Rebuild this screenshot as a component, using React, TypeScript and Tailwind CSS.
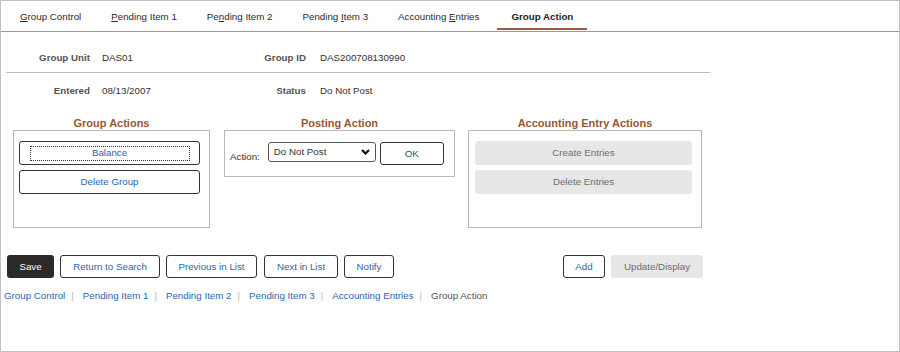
import React from "react";

// 탭 목록 (밑줄 글자는 접근키)
const tabs: { pre: string; key: string; post: string; active?: boolean }[] = [
  { pre: "", key: "G", post: "roup Control" },
  { pre: "", key: "P", post: "ending Item 1" },
  { pre: "Pe", key: "n", post: "ding Item 2" },
  { pre: "Pending ", key: "I", post: "tem 3" },
  { pre: "Accounting ", key: "E", post: "ntries" },
  { pre: "Group Action", key: "", post: "", active: true },
];

const footerLinks = [
  "Group Control",
  "Pending Item 1",
  "Pending Item 2",
  "Pending Item 3",
  "Accounting Entries",
];

function OutlineButton({
  children,
  className = "",
}: {
  children: React.ReactNode;
  className?: string;
}) {
  return (
    <button
      type="button"
      className={[
        "h-[23px] border border-[#333] rounded-[3px] bg-white text-[#2767ad] flex items-center justify-center",
        className,
      ].join(" ")}
    >
      {children}
    </button>
  );
}

function GroupBox({
  title,
  className,
  children,
}: {
  title: string;
  className: string;
  children: React.ReactNode;
}) {
  return (
    <div className={["flex flex-col", className].join(" ")}>
      <div className="h-[13px] text-center text-[11px] leading-[13px] font-bold text-[#9a5631]">
        {title}
      </div>
      {children}
    </div>
  );
}

export default function App() {
  return (
    <div className="relative w-[900px] h-[352px] overflow-hidden bg-white font-['Liberation_Sans',Arial,sans-serif] text-[9.75px] leading-[12px] text-[#333]">
      {/* 상단 오른쪽 잘린 링크 */}
      <span className="absolute z-10 top-[-9px] right-[-6px] text-[#2767ad]">
        New Window
      </span>

      <div className="w-full h-full border border-[#c0c0c0]">
        {/* 탭 바 */}
        <div className="h-[31px] border-b border-[#9a9a9a] flex gap-[2px] pl-[5px]">
          {tabs.map((t, i) => (
            <div
              key={t.pre + t.key + t.post}
              className={[
                "h-[29px] px-[14px] pt-[10px] border-b-2 whitespace-nowrap",
                i === 5 ? "ml-[2px]" : "",
                t.active
                  ? "border-[#a35a33] font-bold text-[#222]"
                  : "border-transparent text-[#2b2b2b]",
              ].join(" ")}
            >
              {t.pre}
              {t.key && <u>{t.key}</u>}
              {t.post}
            </div>
          ))}
        </div>

        {/* 헤더 정보 */}
        <div className="ml-[5px] w-[704px]">
          <div className="h-[41px] border-b border-[#bbb] pt-[20px] flex">
            <div className="w-[84px] text-right font-bold text-[#555]">Group Unit</div>
            <div className="ml-[12px] w-[104px]">DAS01</div>
            <div className="w-[100px] text-right font-bold text-[#555]">Group ID</div>
            <div className="ml-[14px]">DAS200708130990</div>
          </div>
          <div className="h-[24px] pt-[12px] flex">
            <div className="w-[84px] text-right font-bold text-[#555]">Entered</div>
            <div className="ml-[12px] w-[104px]">08/13/2007</div>
            <div className="w-[100px] text-right font-bold text-[#555]">Status</div>
            <div className="ml-[14px]">Do Not Post</div>
          </div>
        </div>

        {/* 그룹 박스 */}
        <div className="mt-[20px] ml-[12px] flex items-start">
          <GroupBox title="Group Actions" className="w-[197px]">
            <div className="h-[98px] border border-[#bcb8b2] pt-[10px] pl-[5px] flex flex-col gap-[5px]">
              <OutlineButton className="w-[181px] h-[24px]">
                <span className="w-[158px] h-[13px] outline outline-1 outline-dotted outline-[#333] flex items-center justify-center">
                  Balance
                </span>
              </OutlineButton>
              <OutlineButton className="w-[181px] h-[24px]">Delete Group</OutlineButton>
            </div>
          </GroupBox>

          <GroupBox title="Posting Action" className="ml-[14px] w-[231px]">
            <div className="h-[47px] border border-[#bcb8b2] pt-[11px] pl-[5px] flex items-start">
              <span className="mt-[9px]">Action:</span>
              <div className="relative ml-[8px] w-[108px] h-[20px] border border-[#555] rounded-[3px] pl-[5px] flex items-center">
                Do Not Post
                <svg
                  className="absolute right-[5px] top-[6px]"
                  width="9"
                  height="6"
                  viewBox="0 0 9 6"
                >
                  <path d="M1 1 L4.5 4.5 L8 1" fill="none" stroke="#111" strokeWidth="2.2" />
                </svg>
              </div>
              <button
                type="button"
                className="ml-[4px] w-[64px] h-[23px] border border-[#333] rounded-[3px] text-[#2f4f78]"
              >
                OK
              </button>
            </div>
          </GroupBox>

          <GroupBox title="Accounting Entry Actions" className="ml-[13px] w-[234px]">
            <div className="h-[98px] border border-[#bcb8b2] pt-[10px] pl-[6px] flex flex-col gap-[5px]">
              <div className="w-[217px] h-[24px] rounded-[3px] bg-[#e7e7e7] text-[#6d6d6d] flex items-center justify-center">
                Create Entries
              </div>
              <div className="w-[217px] h-[24px] rounded-[3px] bg-[#e7e7e7] text-[#6d6d6d] flex items-center justify-center">
                Delete Entries
              </div>
            </div>
          </GroupBox>
        </div>

        {/* 하단 버튼 */}
        <div className="mt-[27px] ml-[6px] flex items-center">
          <button
            type="button"
            className="w-[47px] h-[23px] rounded-[3px] bg-[#2d2926] text-white"
          >
            Save
          </button>
          <OutlineButton className="ml-[6px] w-[100px]">Return to Search</OutlineButton>
          <OutlineButton className="ml-[6px] w-[91px]">Previous in List</OutlineButton>
          <OutlineButton className="ml-[7px] w-[74px]">Next in List</OutlineButton>
          <OutlineButton className="ml-[6px] w-[50px]">Notify</OutlineButton>
          <OutlineButton className="ml-[169px] w-[42px]">Add</OutlineButton>
          <div className="ml-[6px] w-[92px] h-[23px] rounded-[3px] bg-[#e7e7e7] text-[#6d6d6d] flex items-center justify-center">
            Update/Display
          </div>
        </div>

        {/* 하단 링크 */}
        <div className="mt-[12px] ml-[3px] flex items-center whitespace-nowrap">
          {footerLinks.map((l) => (
            <React.Fragment key={l}>
              <span className="text-[#2767ad]">{l}</span>
              <span className="ml-[6px] mr-[9px] text-[#c4b89c]">|</span>
            </React.Fragment>
          ))}
          <span className="text-[#555]">Group Action</span>
        </div>
      </div>
    </div>
  );
}
